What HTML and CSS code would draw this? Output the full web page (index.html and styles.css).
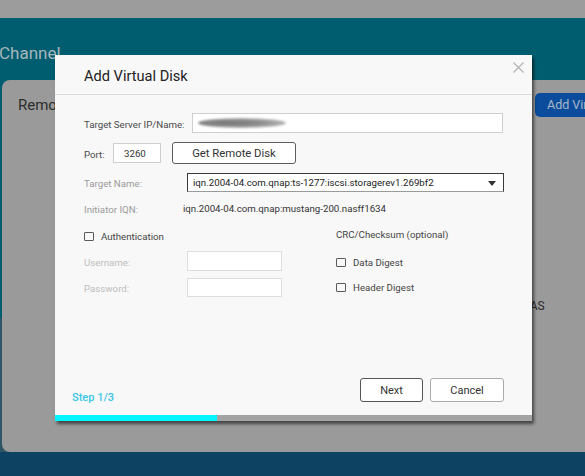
FILE: index.html
```html
<!DOCTYPE html>
<html>
<head>
<meta charset="utf-8">
<link rel="stylesheet" href="styles.css">
</head>
<body>
<div class="page">
  <div class="topbar"></div>
  <div class="main">
    <div class="channel">Channel</div>
    <div class="panel">
      <div class="panel-head">
        <span class="panel-title">Remote Disk</span>
        <span class="add-btn">Add Vir</span>
      </div>
      <div class="panel-text">NAS</div>
    </div>
  </div>
  <div class="footer"></div>

  <div class="dialog">
    <div class="dlg-head">
      <span class="dlg-title">Add Virtual Disk</span>
      <svg class="close" width="11" height="11" viewBox="0 0 11 11"><path d="M0.5 0.5L10.5 10.5M10.5 0.5L0.5 10.5" stroke="#b4b4b4" stroke-width="1.2" fill="none"/></svg>
    </div>
    <div class="dlg-body">
      <div class="row r1">
        <span class="lbl dark w-ip">Target Server IP/Name:</span>
        <span class="input ip"><span class="blur"></span></span>
      </div>
      <div class="row r2">
        <span class="lbl dark w-port">Port:</span>
        <span class="input port">3260</span>
        <span class="btn getdisk">Get Remote Disk</span>
      </div>
      <div class="row r3">
        <span class="lbl mid w-name">Target Name:</span>
        <span class="select">iqn.2004-04.com.qnap:ts-1277:iscsi.storagerev1.269bf2
          <svg class="arrow" width="8" height="5" viewBox="0 0 8 5"><path d="M0 0H8L4 5Z" fill="#333"/></svg>
        </span>
      </div>
      <div class="row r4">
        <span class="lbl mid w-iqn">Initiator IQN:</span>
        <span class="val">iqn.2004-04.com.qnap:mustang-200.nasff1634</span>
      </div>
      <div class="lower">
        <div class="col-left">
          <div class="chk-row"><span class="box"></span><span class="chk-text">Authentication</span></div>
          <div class="row r6"><span class="lbl light w-name">Username:</span><span class="input small"></span></div>
          <div class="row r7"><span class="lbl light w-name">Password:</span><span class="input small"></span></div>
        </div>
        <div class="col-right">
          <div class="crc">CRC/Checksum (optional)</div>
          <div class="chk-row r-dd"><span class="box"></span><span class="chk-text">Data Digest</span></div>
          <div class="chk-row r-hd"><span class="box"></span><span class="chk-text">Header Digest</span></div>
        </div>
      </div>
    </div>
    <div class="dlg-foot">
      <span class="step">Step 1/3</span>
      <div class="btns">
        <span class="btn next">Next</span>
        <span class="btn cancel">Cancel</span>
      </div>
    </div>
    <div class="progress"><div class="progress-fill" style="width:34%"></div></div>
  </div>
</div>
</body>
</html>
```
FILE: styles.css
```css
html, body { margin: 0; padding: 0; }
body {
  width: 585px; height: 476px; overflow: hidden;
  font-family: Roboto, "Liberation Sans", sans-serif;
}
.page { position: relative; width: 585px; height: 476px; display: flex; flex-direction: column; overflow: hidden; }
.topbar { height: 18px; background: #9c9c9c; flex: none; }
.main {
  height: 434px; flex: none;
  background: linear-gradient(#005d70 0, #005d70 300px, #2f5667 300px);
  display: flex; flex-direction: column;
}
.channel {
  height: 62px; box-sizing: border-box; padding-top: 25px;
  font-size: 17px; line-height: 20px; color: #a7b6ba; margin-left: -1px;
}
.panel {
  height: 372px; margin-left: 2px; margin-right: -30px;
  background: #9a9a9a; border-radius: 8px;
  display: flex; flex-direction: column;
}
.panel-head { display: flex; justify-content: space-between; align-items: center; height: 24px; margin-top: 13px; padding-left: 16px; }
.panel-title { font-size: 15px; color: #2c2c2c; }
.add-btn {
  width: 80px; height: 24px; box-sizing: border-box; padding-left: 12px;
  background: #0b4d9c; border-radius: 5px; color: #a9b6c6; font-size: 12.5px; line-height: 24px; white-space: nowrap;
}
.panel-text { margin-top: 182px; padding-left: 519px; font-size: 12px; color: #2a2a2a; }
.footer { flex: 1; background: #0d4262; }

.dialog {
  position: absolute; left: 55px; top: 55px; width: 477px; height: 366px;
  background: #f8f8f8; box-shadow: 2px 3px 3px rgba(0,0,0,0.55);
  display: flex; flex-direction: column;
}
.dlg-head {
  height: 40px; flex: none; box-sizing: border-box; border-bottom: 1px solid #dcdcdc;
  display: flex; align-items: center; justify-content: space-between; padding: 0 8px 0 29px;
}
.dlg-title { font-size: 14.6px; color: #222; margin-top: 3px; }
.close { align-self: flex-start; margin-top: 7px; }
.dlg-body { flex: 1; padding: 18px 28px 0 29px; font-size: 9.7px; color: #444; }
.row { display: flex; align-items: center; }
.r1 { height: 20px; }
.r2 { height: 22px; margin-top: 9px; }
.r3 { height: 19px; margin-top: 9px; }
.r4 { height: 18px; margin-top: 7px; }
.lbl { flex: none; white-space: nowrap; padding-top: 2px; }
.dark { color: #4a4a4a; }
.mid { color: #9a9a9a; }
.light { color: #bdbdbd; }
.w-ip { width: 108px; }
.w-port { width: 29px; }
.w-name { width: 103px; }
.w-iqn { width: 99px; }
.input {
  box-sizing: border-box; height: 19px; background: #fff; border: 1px solid #cfcfcf;
  display: flex; align-items: center;
}
.ip { flex: 1; height: 20px; margin-right: 1px; padding-left: 5px; }
.blur {
  width: 88px; height: 10px; border-radius: 50%;
  background: radial-gradient(ellipse at 35% 50%, #777 0, #8a8a8a 40%, #c4c4c4 80%, rgba(255,255,255,0) 100%);
  filter: blur(0.8px);
}
.port { width: 48px; height: 20px; padding-left: 10px; color: #333; }
.btn {
  box-sizing: border-box; display: flex; align-items: center; justify-content: center;
  background: #fff; border: 1px solid #5c5c5c; border-radius: 3px; color: #333;
}
.getdisk { width: 124px; height: 22px; margin-left: 11px; font-size: 11.3px; }
.select {
  flex: 1; height: 19px; box-sizing: border-box; border: 1px solid #3a3a3a; border-bottom-color: #9a9a9a;
  background: #fff; display: flex; align-items: center; padding-left: 5px; color: #222; position: relative;
}
.arrow { position: absolute; right: 7px; top: 7px; }
.val { color: #333; }
.lower { display: flex; margin-top: 11px; }
.col-left { width: 252px; }
.chk-row { display: flex; align-items: center; height: 16px; }
.box { width: 10px; height: 9px; box-sizing: border-box; border: 1.3px solid #5a5a5a; border-radius: 1px; }
.chk-text { margin-left: 7px; color: #444; }
.r6 { margin-top: 7px; height: 20px; }
.r7 { margin-top: 7px; height: 19px; }
.small { width: 95px; height: 20px; border-color: #dddddd; }
.r7 .small { height: 19px; }
.crc { height: 16px; line-height: 16px; color: #444; margin-top: -1px; }
.r-dd { margin-top: 11px; }
.r-hd { margin-top: 9px; }
.dlg-foot {
  height: 24px; flex: none; margin-bottom: 13px;
  display: flex; justify-content: space-between; align-items: flex-end; padding: 0 28px 0 17px;
}
.step { font-size: 11px; font-weight: 500; line-height: 14px; color: #3cc6e6; margin-bottom: -3px; }
.btns { display: flex; gap: 7px; }
.next { width: 63px; height: 24px; font-size: 11px; border-color: #555; }
.cancel { width: 74px; height: 24px; font-size: 11px; border-color: #ababab; }
.progress { height: 6px; flex: none; background: #a3a3a3; }
.progress-fill { height: 6px; background: #00f5ff; }
```
